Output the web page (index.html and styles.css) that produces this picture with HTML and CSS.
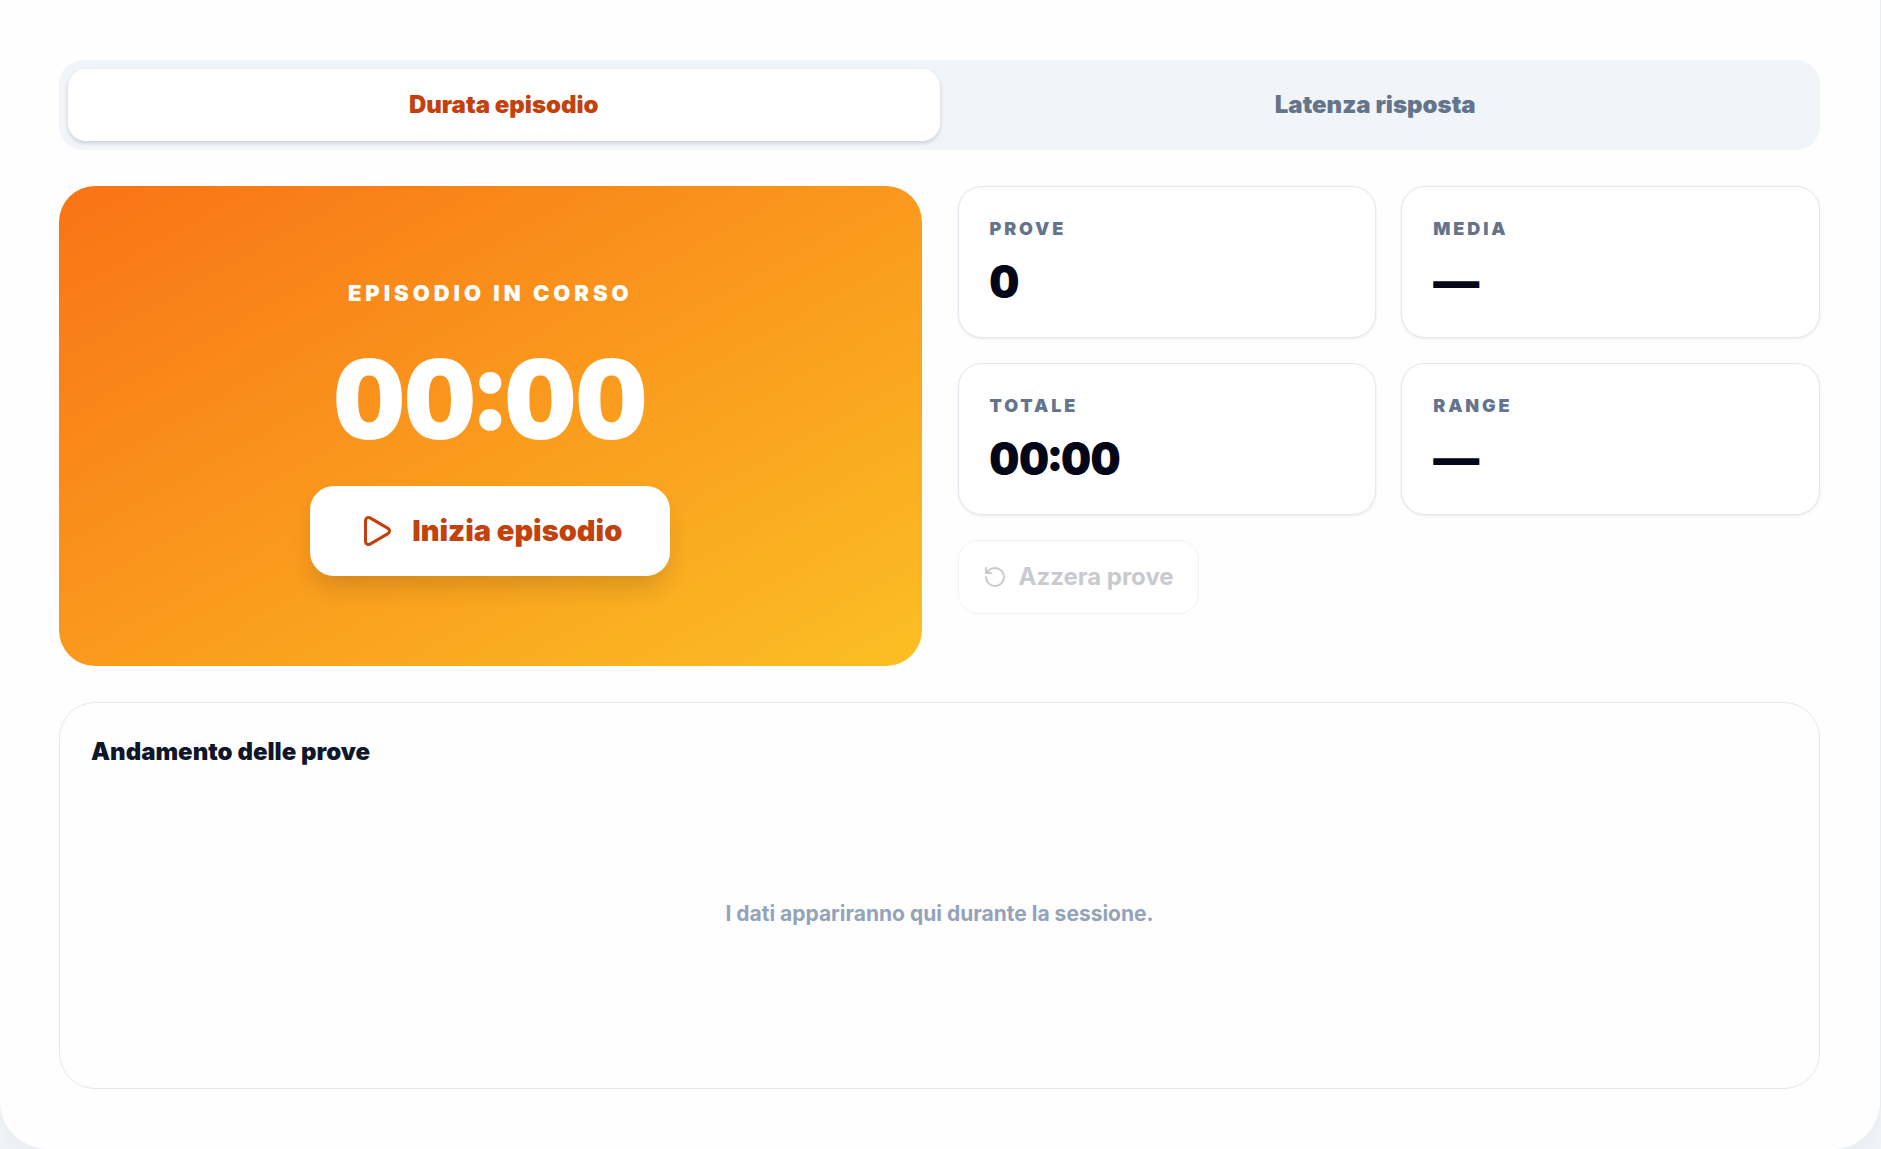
FILE: index.html
```html
<!DOCTYPE html>
<html lang="it">
<head>
    <meta charset="UTF-8">
    <meta name="viewport" content="width=device-width, initial-scale=1.0">
    <title>Durata episodio</title>
    <link rel="stylesheet" href="styles.css">
</head>
<body>
    <main class="panel">
        <div class="tabs" role="tablist">
            <button type="button" class="tab active" role="tab" aria-selected="true">Durata episodio</button>
            <button type="button" class="tab" role="tab" aria-selected="false">Latenza risposta</button>
        </div>

        <div class="columns">
            <section class="timer">
                <p class="timer-label">Episodio in corso</p>
                <div class="timer-value">00:00</div>
                <button type="button" class="start-button">
                    <svg class="start-icon" viewBox="0 0 24 24" fill="none" stroke="currentColor" stroke-width="2" stroke-linecap="round" stroke-linejoin="round" aria-hidden="true">
                        <path d="M5 5a2 2 0 0 1 3.008-1.728l11.997 6.998a2 2 0 0 1 .003 3.458l-12 7A2 2 0 0 1 5 19z"/>
                    </svg>
                    Inizia episodio
                </button>
            </section>

            <section class="summary">
                <dl class="stats">
                    <div class="stat">
                        <dt>Prove</dt>
                        <dd>0</dd>
                    </div>
                    <div class="stat">
                        <dt>Media</dt>
                        <dd>—</dd>
                    </div>
                    <div class="stat">
                        <dt>Totale</dt>
                        <dd>00:00</dd>
                    </div>
                    <div class="stat">
                        <dt>Range</dt>
                        <dd>—</dd>
                    </div>
                </dl>
                <button type="button" class="reset-button" disabled>
                    <svg class="reset-icon" viewBox="0 0 24 24" fill="none" stroke="currentColor" stroke-width="2" stroke-linecap="round" stroke-linejoin="round" aria-hidden="true">
                        <path d="M3 12a9 9 0 1 0 9-9 9.75 9.75 0 0 0-6.74 2.74L3 8"/>
                        <path d="M3 3v5h5"/>
                    </svg>
                    Azzera prove
                </button>
            </section>
        </div>

        <section class="chart">
            <h2>Andamento delle prove</h2>
            <div class="chart-empty">I dati appariranno qui durante la sessione.</div>
        </section>
    </main>
</body>
</html>
```

FILE: styles.css
```css
* {
    box-sizing: border-box;
}
body {
    margin: 0;
    font-family: Inter, "Liberation Sans", sans-serif;
    background-color: #f1f5f9;
    color: #020617;
}
button {
    font-family: inherit;
    cursor: pointer;
}
.panel {
    display: flex;
    flex-direction: column;
    gap: 36px;
    padding: 60px 60px 60px 59px;
    background-color: #fefefe;
    border: solid #e9edf2;
    border-width: 0 1px 1px 0;
    border-radius: 0 0 48px 48px;
    box-shadow: 0 8px 24px rgba(15, 23, 42, 0.04);
}
.tabs {
    display: grid;
    grid-template-columns: 1fr 1fr;
    padding: 9px;
    background-color: #f1f5f9;
    border-radius: 24px;
}
.tab {
    padding: 18px;
    border: none;
    border-radius: 18px;
    background: none;
    color: #64748b;
    font-size: 24px;
    font-weight: 900;
    line-height: 36px;
}
.tab.active {
    background-color: #fff;
    color: #c2410c;
    box-shadow: 0 2px 4px rgba(0, 0, 0, 0.16);
}
.columns {
    display: grid;
    grid-template-columns: 1fr 1fr;
    gap: 36px;
}
.timer {
    display: flex;
    flex-direction: column;
    align-items: center;
    justify-content: center;
    min-height: 480px;
    border-radius: 36px;
    background: linear-gradient(to bottom right, #f97316, #fbbf24);
    color: #fff;
}
.timer-label {
    margin: 0 0 36px;
    font-size: 22px;
    font-weight: 900;
    line-height: 32px;
    letter-spacing: 0.18em;
    text-transform: uppercase;
}
.timer-value {
    margin-bottom: 33px;
    font-size: 110px;
    font-weight: 900;
    line-height: 108px;
    font-variant-numeric: tabular-nums;
}
.start-button {
    display: flex;
    align-items: center;
    gap: 18px;
    padding: 24px 48px;
    border: none;
    border-radius: 24px;
    background-color: #fff;
    color: #c2410c;
    font-size: 29px;
    font-weight: 900;
    line-height: 42px;
    box-shadow: 0 15px 24px -4px rgba(0, 0, 0, 0.14);
}
.start-icon {
    width: 36px;
    height: 36px;
}
.summary {
    display: flex;
    flex-direction: column;
    align-items: flex-start;
    gap: 25px;
}
.stats {
    display: grid;
    grid-template-columns: 1fr 1fr;
    gap: 25px;
    width: 100%;
    margin: 0;
}
.stat {
    padding: 31px;
    border: 1px solid #e2e8f0;
    border-radius: 24px;
    background-color: #fff;
    box-shadow: 0 1px 3px rgba(0, 0, 0, 0.08);
}
.stat dt {
    margin-bottom: 16px;
    color: #64748b;
    font-size: 18px;
    font-weight: 900;
    line-height: 22px;
    letter-spacing: 0.16em;
    text-transform: uppercase;
}
.stat dd {
    margin: 0;
    font-size: 46px;
    font-weight: 900;
    line-height: 50px;
    font-variant-numeric: tabular-nums;
}
.reset-button {
    display: flex;
    align-items: center;
    gap: 12px;
    padding: 18px 24px;
    border: 1px solid #cbd5e1;
    border-radius: 20px;
    background-color: #fff;
    color: #334155;
    font-size: 24px;
    font-weight: 700;
    line-height: 36px;
}
.reset-button:disabled {
    color: #c8cacd;
    border-color: #f0f2f4;
    cursor: default;
}
.reset-icon {
    width: 24px;
    height: 24px;
}
.chart {
    padding: 31px;
    border: 1px solid #e2e8f0;
    border-radius: 36px;
}
.chart h2 {
    margin: 0;
    color: #0f172a;
    font-size: 24px;
    font-weight: 900;
    line-height: 36px;
}
.chart-empty {
    display: flex;
    align-items: center;
    justify-content: center;
    min-height: 287px;
    color: #94a3b8;
    font-size: 21px;
    font-weight: 700;
}
```
